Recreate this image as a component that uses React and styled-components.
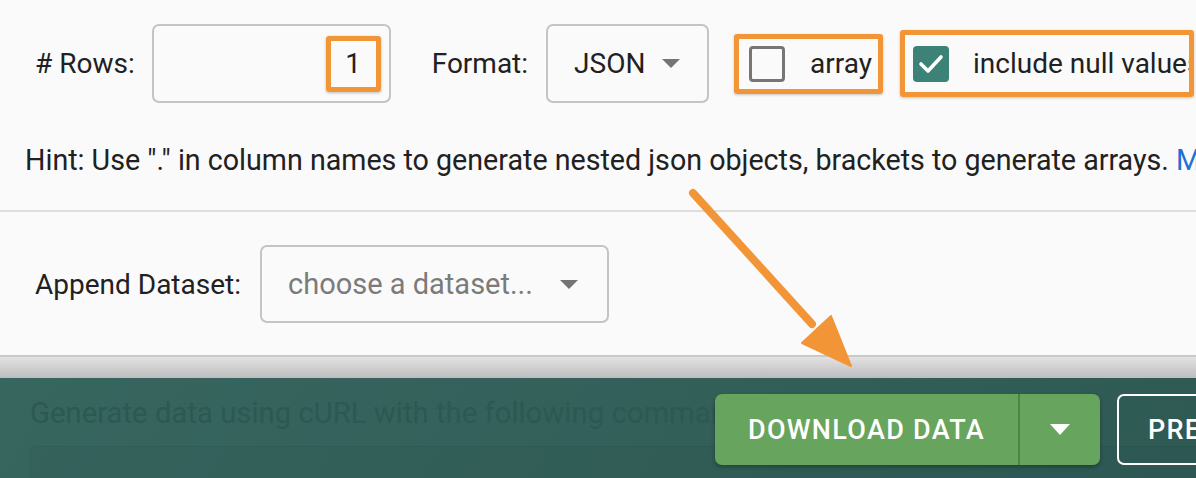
import React from 'react';
import styled, { createGlobalStyle } from 'styled-components';

const GlobalStyle = createGlobalStyle`
  body {
    margin: 0;
    background: #fafafa;
    font-family: Roboto, "Liberation Sans", sans-serif;
    color: #212121;
    overflow: hidden;
  }
`;

const Page = styled.div`
  position: relative;
  width: 1196px;
  height: 478px;
  overflow: hidden;
  display: flex;
  flex-direction: column;
  white-space: nowrap;
`;

const Options = styled.div`
  display: flex;
  align-items: center;
  height: 79px;
  padding: 24px 0 0 35px;
`;

const Label = styled.span`
  font-size: 28px;
  margin-right: ${({ $gap }) => $gap || 17}px;
`;

const Field = styled.div`
  box-sizing: border-box;
  flex: none;
  display: flex;
  align-items: center;
  justify-content: ${({ $end }) => ($end ? 'flex-end' : 'space-between')};
  width: ${({ $w }) => $w}px;
  height: ${({ $h }) => $h || 79}px;
  padding: ${({ $pad }) => $pad};
  border: 2px solid #c4c4c4;
  border-radius: 7px;
  font-size: ${({ $muted }) => ($muted ? 29 : 28)}px;
  color: ${({ $muted }) => ($muted ? '#7b7b7b' : '#212121')};
`;

const Caret = styled.span`
  flex: none;
  width: 0;
  height: 0;
  border-left: ${({ $w }) => ($w || 18) / 2}px solid transparent;
  border-right: ${({ $w }) => ($w || 18) / 2}px solid transparent;
  border-top: ${({ $h }) => $h || 9}px solid ${({ $color }) => $color || '#757575'};
`;

const Mark = styled.span`
  box-sizing: border-box;
  display: flex;
  align-items: center;
  justify-content: center;
  width: 55px;
  height: 56px;
  border: 5px solid #f29537;
  border-radius: 3px;
  box-shadow: 0 1px 3px rgba(0, 0, 0, 0.25);
`;

const Annotated = styled.label`
  box-sizing: border-box;
  flex: none;
  display: flex;
  align-items: center;
  gap: ${({ $gap }) => $gap}px;
  width: ${({ $w }) => $w}px;
  height: ${({ $h }) => $h}px;
  margin-left: ${({ $ml }) => $ml}px;
  padding-left: ${({ $pl }) => $pl}px;
  border: 5px solid #f29537;
  border-radius: 3px;
  box-shadow: 0 1px 3px rgba(0, 0, 0, 0.22);
  font-size: 28px;
  overflow: hidden;
`;

const Box = styled.span`
  box-sizing: border-box;
  flex: none;
  display: flex;
  align-items: center;
  justify-content: center;
  width: 36px;
  height: 36px;
  border-radius: 4px;
  border: ${({ $checked }) => ($checked ? 'none' : '3px solid #767676')};
  background: ${({ $checked }) => ($checked ? '#3d8277' : 'transparent')};
`;

const Hint = styled.p`
  margin: 42px 0 0;
  padding-left: 25px;
  font-size: 28.65px;
  line-height: 30px;
`;

const Link = styled.span`
  color: #1e6fd6;
`;

const Divider = styled.hr`
  margin: 35px 0 0;
  border: none;
  height: 2px;
  background: #dedede;
`;

const AppendRow = styled.div`
  display: flex;
  align-items: center;
  margin-top: 33px;
  padding-left: 35px;
`;

const Shelf = styled.div`
  margin-top: 32px;
  height: 2px;
  background: #c9c9c9;
`;

const Shade = styled.div`
  height: 21px;
  background: linear-gradient(#e2e2e2, #bdbdbd);
`;

const Footer = styled.div`
  display: grid;
  height: 100px;
  background: linear-gradient(120deg, #37665f 0%, #335f59 60%, #2f5a54 100%);
  & > * {
    grid-area: 1 / 1;
  }
`;

const Curl = styled.div`
  padding: 18px 0 0 30px;
  font-size: 29.3px;
  color: #2d5853;
`;

const CurlBox = styled.div`
  margin-top: 16px;
  height: 40px;
  border-radius: 6px 0 0 0;
  background: rgba(0, 0, 0, 0.025);
  border-top: 1px solid rgba(0, 0, 0, 0.05);
  border-left: 1px solid rgba(0, 0, 0, 0.05);
`;

const Actions = styled.div`
  display: flex;
  gap: 17px;
  align-self: start;
  margin: 16px 0 0 715px;
`;

const Download = styled.div`
  display: flex;
  height: 71px;
  border-radius: 7px;
  background: #67a45d;
  box-shadow: 0 2px 4px rgba(0, 0, 0, 0.3);
  overflow: hidden;
`;

const ButtonPart = styled.button`
  display: flex;
  align-items: center;
  justify-content: center;
  width: ${({ $w }) => $w}px;
  padding: 0;
  border: none;
  border-left: ${({ $split }) => ($split ? '2px solid #4f8447' : 'none')};
  background: transparent;
  color: #fff;
  font-family: Roboto, "Liberation Sans", sans-serif;
  font-size: 27px;
  font-weight: 500;
  letter-spacing: 1.3px;
`;

const Preview = styled.button`
  box-sizing: border-box;
  flex: none;
  width: 200px;
  height: 71px;
  padding: 0 0 0 29px;
  text-align: left;
  border: 2px solid #ffffff;
  border-radius: 7px;
  background: transparent;
  color: #fff;
  font-family: Roboto, "Liberation Sans", sans-serif;
  font-size: 27px;
  font-weight: 500;
  letter-spacing: 1.3px;
`;

const Arrow = styled.svg`
  position: absolute;
  left: 680px;
  top: 180px;
  pointer-events: none;
`;

export default function App() {
  return (
    <>
      <GlobalStyle />
      <Page>
        <Options>
          <Label>
            # Rows:
          </Label>
          <Field $w={239} $end $pad="0 8px 0 0">
            <Mark>1</Mark>
          </Field>
          <Label $gap={18} style={{ marginLeft: 41 }}>
            Format:
          </Label>
          <Field $w={163} $pad="0 27px 0 26px">
            JSON
            <Caret />
          </Field>
          <Annotated $w={149} $h={60} $ml={25} $pl={10} $gap={25}>
            <Box />
            array
          </Annotated>
          <Annotated $w={294} $h={67} $ml={17} $pl={8} $gap={24}>
            <Box $checked>
              <svg width="26" height="22" viewBox="0 0 26 22">
                <polyline points="3,11 10,18 23,4" fill="none" stroke="#fff" strokeWidth="3.6" strokeLinecap="round" strokeLinejoin="round" />
              </svg>
            </Box>
            include null values
          </Annotated>
        </Options>

        <Hint>
          Hint: Use "." in column names to generate nested json objects, brackets to generate arrays.{' '}
          <Link>More info</Link>
        </Hint>

        <Divider />

        <AppendRow>
          <Label $gap={19}>Append Dataset:</Label>
          <Field $w={349} $h={78} $muted $pad="0 29px 0 26px">
            choose a dataset...
            <Caret />
          </Field>
        </AppendRow>

        <Shelf />
        <Shade />

        <Footer>
          <Curl>
            Generate data using cURL with the following command
            <CurlBox />
          </Curl>
          <Actions>
            <Download>
              <ButtonPart $w={303}>DOWNLOAD DATA</ButtonPart>
              <ButtonPart $w={82} $split>
                <Caret $w={20} $h={11} $color="#fff" />
              </ButtonPart>
            </Download>
            <Preview>PREVIEW</Preview>
          </Actions>
        </Footer>

        <Arrow width="190" height="200" viewBox="0 0 190 200">
          <line x1="13" y1="13" x2="132" y2="144" stroke="#f29537" strokeWidth="8" strokeLinecap="round" />
          <polygon points="122,163 151,136 171,186" fill="#f29537" stroke="#f29537" strokeWidth="2" strokeLinejoin="round" />
        </Arrow>
      </Page>
    </>
  );
}
